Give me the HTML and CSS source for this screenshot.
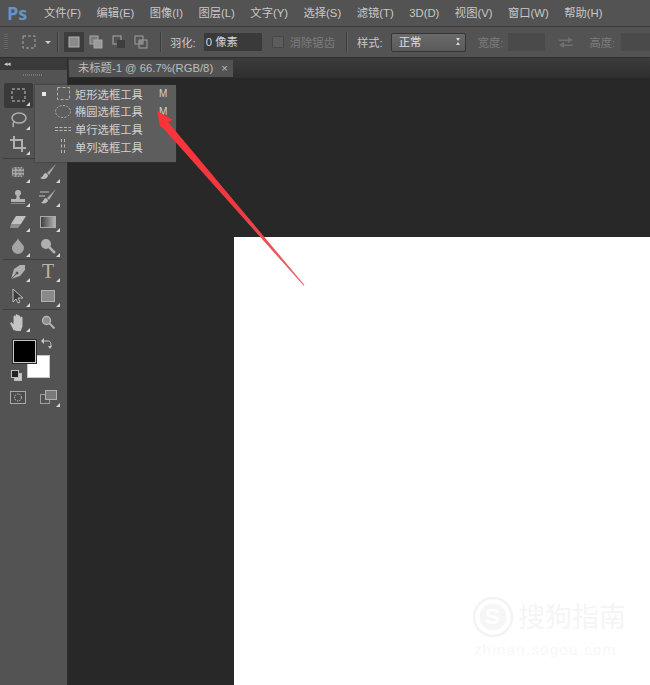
FILE: index.html
```html
<!DOCTYPE html>
<html lang="zh-CN">
<head>
  <meta charset="UTF-8" />
  <title>Photoshop</title>
  <link rel="stylesheet" href="styles.css">
</head>
<body>
  <header class="menubar">
    <span class="logo">Ps</span>
    <nav class="menu">
      <span>文件(F)</span>
      <span>编辑(E)</span>
      <span>图像(I)</span>
      <span>图层(L)</span>
      <span>文字(Y)</span>
      <span>选择(S)</span>
      <span>滤镜(T)</span>
      <span>3D(D)</span>
      <span>视图(V)</span>
      <span>窗口(W)</span>
      <span>帮助(H)</span>
    </nav>
  </header>

  <div class="options">
    <span class="grip"></span>
    <svg class="opt-tool" width="14" height="14" viewBox="0 0 14 14"><rect x="1" y="1" width="12" height="12" fill="none" stroke="#a8a8a8" stroke-dasharray="3 2"/></svg>
    <span class="caret"></span>
    <span class="sep sep-a"></span>
    <span class="mode active"><svg width="12" height="12" viewBox="0 0 12 12"><rect x="1" y="1" width="10" height="10" fill="#8a8a8a" stroke="#b0b0b0"/></svg></span>
    <span class="mode"><svg width="14" height="14" viewBox="0 0 14 14"><rect x="1" y="1" width="8" height="8" fill="#7a7a7a" stroke="#a8a8a8"/><rect x="5" y="5" width="8" height="8" fill="#9a9a9a" stroke="#a8a8a8"/></svg></span>
    <span class="mode"><svg width="14" height="14" viewBox="0 0 14 14"><rect x="1" y="1" width="8" height="8" fill="none" stroke="#a8a8a8"/><rect x="5" y="5" width="8" height="8" fill="#3e3e3e"/></svg></span>
    <span class="mode"><svg width="14" height="14" viewBox="0 0 14 14"><rect x="1" y="1" width="8" height="8" fill="none" stroke="#a0a0a0"/><rect x="5" y="5" width="8" height="8" fill="none" stroke="#a0a0a0"/><rect x="5" y="5" width="4" height="4" fill="#8c8c8c"/></svg></span>
    <span class="sep sep-b"></span>
    <label class="opt-label feather-label">羽化:</label>
    <span class="field feather">0 像素</span>
    <span class="check"></span>
    <span class="opt-label dim aa-label">消除锯齿</span>
    <span class="sep sep-c"></span>
    <label class="opt-label style-label">样式:</label>
    <span class="select">正常<span class="arrows"></span></span>
    <span class="opt-label dim width-label">宽度:</span>
    <span class="field empty"></span>
    <svg class="swap" width="14" height="12" viewBox="0 0 14 12"><path d="M0 3.500h9V1l5 3-5 3V5H0zM14 8.500H5V6L0 9l5 3v-2h9z" fill="#6f6f6f"/></svg>
    <span class="opt-label dim height-label">高度:</span>
    <span class="field empty last"></span>
  </div>

  <div class="workspace">
    <aside class="toolbar">
      <div class="collapse">◂◂</div>
      <div class="tool-grip"></div>

      <div class="tools">
        <span class="tool active corner">
          <svg width="16" height="14" viewBox="0 0 16 14"><rect x="1" y="1" width="13" height="12" fill="none" stroke="#c4c4c4" stroke-dasharray="3 2"/></svg>
        </span>
        <span></span>
        <span class="tool corner">
          <svg width="18" height="18" viewBox="0 0 18 18"><ellipse cx="10" cy="7" rx="7" ry="5" fill="none" stroke="#b0b0b0" stroke-width="1.500"/><path d="M5 11c-2 2 0 3-1 5" fill="none" stroke="#b0b0b0" stroke-width="1.500"/></svg>
        </span>
        <span></span>
        <span class="tool corner">
          <svg width="16" height="16" viewBox="0 0 16 16"><path d="M4 0v12h12M0 4h12v12" fill="none" stroke="#b0b0b0" stroke-width="2"/></svg>
        </span>
        <span></span>

        <hr class="rule rule-first">

        <span class="tool corner">
          <svg width="18" height="16" viewBox="0 0 18 16"><rect x="3" y="3" width="12" height="10" rx="3" fill="#a8a8a8"/><path d="M1 4h16M1 8h16M1 12h16M5 1v14M9 1v14M13 1v14" stroke="#5a5a5a" stroke-dasharray="2 1"/></svg>
        </span>
        <span class="tool corner">
          <svg width="18" height="16" viewBox="0 0 18 16"><path d="M17 0L8 9l2 2z" fill="#a8a8a8"/><path d="M7 9c-3 0-2 4-6 5 3 2 8 1 8-3z" fill="#bcbcbc"/></svg>
        </span>
        <span class="tool corner">
          <svg width="16" height="16" viewBox="0 0 16 16"><circle cx="8" cy="4" r="3" fill="#b4b4b4"/><path d="M7 6h2l1 4H6z" fill="#b4b4b4"/><rect x="1" y="10" width="14" height="3" fill="#b4b4b4"/><rect x="1" y="14" width="14" height="1" fill="#8c8c8c"/></svg>
        </span>
        <span class="tool corner">
          <svg width="18" height="16" viewBox="0 0 18 16"><path d="M17 0L8 9l2 2z" fill="#a8a8a8"/><path d="M7 9c-2 0-2 3-5 5 3 1 7 0 7-3z" fill="#bcbcbc"/><path d="M1 3h9M0 7h6" stroke="#9a9a9a" stroke-width="1.500"/></svg>
        </span>
        <span class="tool corner">
          <svg width="18" height="14" viewBox="0 0 18 14"><path d="M7 1h10l-5 8H2z" fill="#c0c0c0"/><path d="M2 9h10l-3 4H1z" fill="#8e8e8e"/></svg>
        </span>
        <span class="tool corner">
          <svg width="16" height="12" viewBox="0 0 16 12"><defs><linearGradient id="grad"><stop offset="0" stop-color="#3c3c3c"/><stop offset="1" stop-color="#b8b8b8"/></linearGradient></defs><rect x="0.500" y="0.500" width="15" height="11" fill="url(#grad)" stroke="#aaa"/></svg>
        </span>
        <span class="tool corner">
          <svg width="14" height="16" viewBox="0 0 14 16"><path d="M7 0c1 4 6 6 6 10a6 6 0 0 1-12 0c0-4 5-6 6-10z" fill="#a4a4a4"/></svg>
        </span>
        <span class="tool corner">
          <svg width="16" height="16" viewBox="0 0 16 16"><circle cx="6" cy="6" r="5" fill="#b0b0b0"/><path d="M9 9l6 6" stroke="#b0b0b0" stroke-width="2.500"/></svg>
        </span>

        <hr class="rule">

        <span class="tool corner">
          <svg width="16" height="16" viewBox="0 0 16 16"><path d="M15 1l-5 0-6 4-3 10 9-3 5-6z" fill="#b0b0b0"/><path d="M1 15l5-5" stroke="#555"/><circle cx="7" cy="9" r="1.500" fill="#555"/></svg>
        </span>
        <span class="tool corner type-tool">T</span>
        <span class="tool corner">
          <svg width="12" height="16" viewBox="0 0 12 16"><path d="M1 1v13l3-3 2 4 2-1-2-4h5z" fill="#3c3c3c" stroke="#c0c0c0"/></svg>
        </span>
        <span class="tool corner">
          <svg width="14" height="12" viewBox="0 0 14 12"><rect x="0.500" y="0.500" width="13" height="11" fill="#8a8a8a" stroke="#b0b0b0"/></svg>
        </span>

        <hr class="rule">

        <span class="tool corner">
          <svg width="18" height="18" viewBox="0 0 16 16"><path d="M4 15L1 9l1-1 2 2V3l1-1 1 1v-2h1l1 1v5-5h1l1 1v5-4l1-1 1 1v8l-2 5z" fill="#c4c4c4"/></svg>
        </span>
        <span class="tool">
          <svg width="14" height="14" viewBox="0 0 14 14"><circle cx="5.500" cy="5.500" r="4" fill="#8e8e8e" stroke="#b4b4b4" stroke-width="1.500"/><path d="M8.500 8.500l5 5" stroke="#b4b4b4" stroke-width="2"/></svg>
        </span>
      </div>

      <div class="colors">
        <span class="swatch back"></span>
        <span class="swatch front"></span>
        <svg class="swap-colors" width="11" height="11" viewBox="0 0 11 11"><path d="M1 3h6c2 0 3 1 3 5" fill="none" stroke="#c8c8c8"/><path d="M3 0v6L0 3zM7 8h4l-2 3z" fill="#c8c8c8"/></svg>
        <span class="mini">
          <span class="mini-back"></span>
          <span class="mini-front"></span>
        </span>
      </div>

      <div class="tools bottom-tools">
        <span class="tool">
          <svg width="16" height="13" viewBox="0 0 16 13"><rect x="0.500" y="0.500" width="15" height="12" fill="#4c4c4c" stroke="#a8a8a8"/><circle cx="8" cy="6.500" r="3.500" fill="none" stroke="#c4c4c4" stroke-dasharray="1.500 1"/></svg>
        </span>
        <span class="tool corner">
          <svg width="17" height="14" viewBox="0 0 17 14"><rect x="0.500" y="4.500" width="9" height="9" fill="#535353" stroke="#a0a0a0"/><rect x="5.500" y="0.500" width="11" height="9" fill="#7a7a7a" stroke="#b0b0b0"/></svg>
        </span>
      </div>
    </aside>

    <main class="document-area">
      <div class="tabs">
        <span class="tab">未标题-1 @ 66.7%(RGB/8)<span class="tab-close">×</span></span>
      </div>
      <div class="canvas">
        <div class="sheet"></div>
      </div>
    </main>
  </div>

  <div class="flyout">
    <div class="fly-row">
      <span class="bullet"></span>
      <span class="fly-icon"><svg width="13" height="13" viewBox="0 0 13 13"><rect x="0.500" y="0.500" width="12" height="12" fill="none" stroke="#b0b0b0" stroke-dasharray="3 2"/></svg></span>
      <span class="fly-name">矩形选框工具</span><span class="key">M</span>
    </div>
    <div class="fly-row">
      <span class="bullet off"></span>
      <span class="fly-icon"><svg width="16" height="13" viewBox="0 0 16 13"><ellipse cx="8" cy="6.500" rx="7.500" ry="6" fill="none" stroke="#b0b0b0" stroke-dasharray="2 1.500"/></svg></span>
      <span class="fly-name">椭圆选框工具</span><span class="key">M</span>
    </div>
    <div class="fly-row">
      <span class="bullet off"></span>
      <span class="fly-icon"><svg width="16" height="6" viewBox="0 0 16 6"><path d="M0 1.500h16M0 4.500h16" stroke="#b8b8b8" stroke-dasharray="3 1.500"/></svg></span>
      <span class="fly-name">单行选框工具</span>
    </div>
    <div class="fly-row">
      <span class="bullet off"></span>
      <span class="fly-icon"><svg width="6" height="15" viewBox="0 0 6 15"><path d="M1.500 0v15M4.500 0v15" stroke="#b8b8b8" stroke-dasharray="3 2.500"/></svg></span>
      <span class="fly-name">单列选框工具</span>
    </div>
  </div>

  <svg class="pointer" width="650" height="685" viewBox="0 0 650 685">
    <defs>
      <linearGradient id="tail" gradientUnits="userSpaceOnUse" x1="160" y1="115" x2="304" y2="285">
        <stop offset="0" stop-color="#fb3339"/>
        <stop offset="0.550" stop-color="#ee3a40"/>
        <stop offset="1" stop-color="#e86a70"/>
      </linearGradient>
    </defs>
    <path d="M157 111L173 120 168 122 304.500 285 303.500 285.500 163 128 160 126z" fill="url(#tail)"/>
  </svg>

  <div class="watermark">
    <svg width="42" height="42" viewBox="0 0 42 42"><circle cx="21" cy="21" r="19" fill="none" stroke="#f3f3f3" stroke-width="2.500"/><circle cx="21" cy="21" r="13.500" fill="#f6f6f6"/></svg>
    <span class="wm-s">S</span>
    <span class="wm-name">搜狗指南</span>
    <span class="wm-url">zhinan.sogou.com</span>
  </div>
</body>
</html>
```

FILE: styles.css
```css
html, body {
  margin: 0;
  padding: 0;
}
body {
  position: relative;
  width: 650px;
  height: 685px;
  overflow: hidden;
  background: #282828;
  font-family: "Liberation Sans", "Noto Sans CJK SC", sans-serif;
  color: #c4c4c4;
}

/* menu */
.menubar {
  display: flex;
  align-items: center;
  height: 27px;
  box-sizing: border-box;
  background: #535353;
  border-bottom: 1px solid #3a3a3a;
}
.logo {
  width: 44px;
  padding-left: 7px;
  box-sizing: border-box;
  font-family: "Open Sans", sans-serif;
  font-size: 18px;
  font-weight: 700;
  color: #6496c2;
}
.menu {
  display: flex;
  align-items: center;
  gap: 15.500px;
  font-size: 11.300px;
  line-height: 16px;
  white-space: nowrap;
  color: #c8c8c8;
}

/* options bar */
.options {
  position: relative;
  display: flex;
  align-items: center;
  height: 31px;
  box-sizing: border-box;
  background: #535353;
  border-bottom: 1px solid #2e2e2e;
  font-size: 11.300px;
  white-space: nowrap;
}
.options > * {
  flex: none;
}
.grip {
  width: 4px;
  height: 16px;
  margin-left: 4px;
  background: repeating-linear-gradient(#6a6a6a 0 1px, #4a4a4a 1px 2px);
}
.opt-tool {
  margin-left: 14px;
}
.caret {
  width: 0;
  height: 0;
  margin-left: 9px;
  border: 3px solid transparent;
  border-top: 3px solid #d0d0d0;
  border-bottom: 0;
}
.sep {
  width: 1px;
  height: 20px;
  background: #3c3c3c;
  border-right: 1px solid #616161;
}
.sep-a { margin-left: 6px; }
.sep-b { margin-left: 6.500px; }
.sep-c { margin-left: 11px; }
.mode {
  display: flex;
  align-items: center;
  justify-content: center;
  width: 20px;
  height: 20px;
  margin-right: 2.500px;
}
.mode.active {
  margin-left: 5px;
  margin-right: 2px;
  background: #3c3c3c;
}
.opt-label {
  color: #c8c8c8;
}
.opt-label.dim {
  color: #7d7d7d;
}
.feather-label { margin-left: 8px; }
.field {
  box-sizing: border-box;
  height: 18px;
  background: #3a3a3a;
  line-height: 18px;
}
.feather {
  width: 58px;
  margin-left: 8px;
  padding-left: 2px;
  color: #d4d4d4;
}
.check {
  width: 12px;
  height: 12px;
  margin-left: 10px;
  background: #5c5c5c;
  border: 1px solid #484848;
  box-sizing: border-box;
}
.aa-label { margin-left: 6px; }
.style-label { margin-left: 9px; }
.select {
  position: relative;
  box-sizing: border-box;
  width: 75px;
  height: 19px;
  margin-left: 8px;
  padding-left: 7px;
  line-height: 17px;
  background: linear-gradient(#6a6a6a, #5a5a5a);
  border: 1px solid #353535;
  border-radius: 2px;
  color: #e0e0e0;
}
.arrows {
  position: absolute;
  right: 5px;
  top: 4px;
  width: 0;
  height: 1px;
  border-style: solid;
  border-color: #d8d8d8 transparent;
  border-width: 3px 2.500px;
}
.width-label { margin-left: 12px; }
.empty {
  width: 37px;
  margin-left: 5px;
  background: #4a4a4a;
}
.swap { margin-left: 14px; }
.height-label { margin-left: 16px; }
.empty.last {
  width: 30px;
  margin-left: 6px;
}

/* left tools */
.workspace {
  display: flex;
  height: 627px;
}
.toolbar {
  flex: none;
  width: 68px;
  box-sizing: border-box;
  background: #535353;
  border-right: 1px solid #2e2e2e;
}
.collapse {
  height: 12px;
  background: #3a3a3a;
  padding-left: 4px;
  font-size: 7px;
  line-height: 12px;
  letter-spacing: -1px;
  color: #c8c8c8;
}
.tool-grip {
  width: 20px;
  height: 2px;
  margin: 4px 0 0 23px;
  background: repeating-linear-gradient(90deg, #7a7a7a 0 1px, #4c4c4c 1px 2px);
}
.tools {
  display: grid;
  grid-template-columns: 30px 30px;
  margin: 7px 0 0 3px;
}
.tool {
  position: relative;
  display: flex;
  align-items: center;
  justify-content: center;
  height: 24.600px;
}
.tool.active {
  width: 29px;
  margin-left: 1px;
  background: #3a3a3a;
  border-radius: 2px;
}
.corner::after {
  content: "";
  position: absolute;
  right: 3px;
  bottom: 2px;
  border: 2px solid transparent;
  border-right-color: #d8d8d8;
  border-bottom-color: #d8d8d8;
}
.type-tool {
  font-family: "Liberation Serif", serif;
  font-size: 20px;
  color: #b4b4b4;
}
.rule {
  grid-column: 1 / 3;
  width: 58px;
  height: 1px;
  margin: 0;
  border: 0;
  background: #3f3f3f;
}
.rule-first {
  margin: 1.200px 0;
}
.colors {
  position: relative;
  height: 45px;
  margin-top: 5.400px;
}
.swatch {
  position: absolute;
  box-sizing: border-box;
  width: 23px;
  height: 23px;
  border: 1px solid #c8c8c8;
}
.front {
  left: 13px;
  top: 0;
  background: #000;
  outline: 1px solid #2c2c2c;
}
.back {
  left: 27px;
  top: 15px;
  background: #fff;
}
.swap-colors {
  position: absolute;
  left: 41px;
  top: -2px;
}
.mini {
  position: absolute;
  left: 11px;
  top: 30px;
  width: 11px;
  height: 11px;
}
.mini-back, .mini-front {
  position: absolute;
  width: 6px;
  height: 6px;
  border: 1px solid #bdbdbd;
}
.mini-back {
  left: 3px;
  top: 3px;
  background: #c8c8c8;
}
.mini-front {
  left: 0;
  top: 0;
  background: #222;
}
.bottom-tools {
  margin-top: 0;
}

/* document */
.document-area {
  flex: 1;
  display: flex;
  flex-direction: column;
  min-width: 0;
}
.tabs {
  display: flex;
  height: 20px;
  box-sizing: border-box;
  padding-top: 2px;
  background: linear-gradient(#3c3c3c, #2e2e2e);
}
.tab {
  margin-left: 1px;
  padding: 0 5px 0 9px;
  height: 17px;
  background: #535353;
  font-size: 11.300px;
  line-height: 17px;
  white-space: nowrap;
  color: #bdbdbd;
}
.tab-close {
  margin-left: 8px;
}
.canvas {
  flex: 1;
  box-sizing: border-box;
  min-height: 0;
  background: #282828;
  padding: 159px 0 0 166px;
}
.sheet {
  height: 100%;
  background: #fff;
}

/* flyout over the tools */
.flyout {
  position: absolute;
  left: 35px;
  top: 85px;
  box-sizing: border-box;
  width: 141px;
  height: 77px;
  background: #5d5d5d;
  box-shadow: 0 0 2px #333;
  font-size: 11.300px;
  color: #d2d2d2;
}
.fly-row {
  display: flex;
  align-items: center;
  height: 17.600px;
  padding-left: 7px;
}
.fly-icon {
  flex: none;
  display: flex;
  align-items: center;
  justify-content: center;
  width: 18px;
  height: 17px;
  margin-left: 8px;
}
.bullet {
  flex: none;
  width: 4px;
  height: 4px;
  background: #e8e8e8;
}
.bullet.off {
  visibility: hidden;
}
.fly-name {
  width: 84px;
  margin-left: 3px;
  white-space: nowrap;
}
.key {
  font-size: 10px;
}

/* arrow drawn on the screenshot */
.pointer {
  position: absolute;
  left: 0;
  top: 0;
}

/* watermark */
.watermark {
  position: absolute;
  left: 472px;
  top: 596px;
  width: 160px;
  height: 66px;
}
.watermark svg {
  position: absolute;
  left: 0;
  top: 0;
}
.wm-s {
  position: absolute;
  left: 13px;
  top: 7px;
  font-size: 22px;
  font-weight: 700;
  line-height: 28px;
  color: #fff;
}
.wm-name {
  position: absolute;
  left: 46px;
  top: 4px;
  font-size: 27px;
  line-height: 36px;
  white-space: nowrap;
  color: #f5f5f5;
}
.wm-url {
  position: absolute;
  left: 2px;
  top: 45px;
  font-size: 15px;
  letter-spacing: 1.300px;
  white-space: nowrap;
  color: #f7f7f7;
}
```
